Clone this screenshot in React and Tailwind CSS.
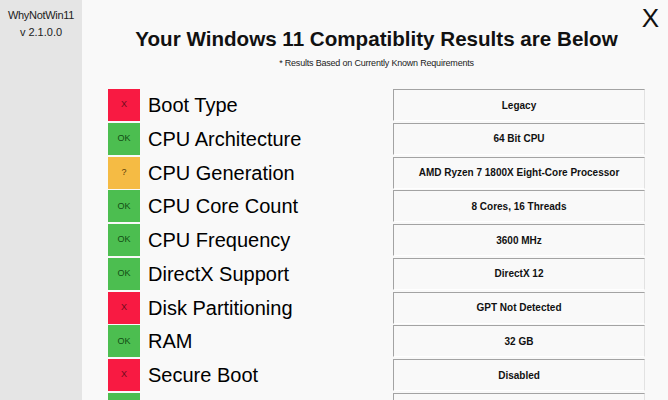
import React from "react";

const checks = [
  { status: "fail", label: "Boot Type", value: "Legacy" },
  { status: "ok", label: "CPU Architecture", value: "64 Bit CPU" },
  { status: "warn", label: "CPU Generation", value: "AMD Ryzen 7 1800X Eight-Core Processor" },
  { status: "ok", label: "CPU Core Count", value: "8 Cores, 16 Threads" },
  { status: "ok", label: "CPU Frequency", value: "3600 MHz" },
  { status: "ok", label: "DirectX Support", value: "DirectX 12" },
  { status: "fail", label: "Disk Partitioning", value: "GPT Not Detected" },
  { status: "ok", label: "RAM", value: "32 GB" },
  { status: "fail", label: "Secure Boot", value: "Disabled" },
  // next row is scrolled off the bottom of the window
  { status: "ok", label: "", value: "", hidden: true },
];

const statusStyles = {
  ok: { box: "bg-[#4cbe50] text-[#124d14]", text: "OK" },
  fail: { box: "bg-[#f81a42] text-[#6e0c1c]", text: "X" },
  warn: { box: "bg-[#f5bb44] text-[#5a3d08]", text: "?" },
};

const CheckRow = ({ status, label, value, hidden }) => {
  const s = statusStyles[status];
  return (
    <div className="flex h-8 shrink-0 items-center">
      <div
        className={`flex h-8 w-8 shrink-0 items-center justify-center text-[9px] ${s.box}`}>
        {hidden ? "" : s.text}
      </div>
      <div className="ml-2 flex-1 text-[20px] leading-none text-black">
        {label}
      </div>
      <div className="flex h-8 w-[252px] shrink-0 items-center justify-center border-t border-l border-t-[#a3a3a3] border-l-[#a3a3a3] border-r border-b border-r-[#e2e2e2] border-b-[#ffffff] bg-[#f9f9f9] text-[10px] font-bold text-[#111]">
        {value}
      </div>
    </div>
  );
};

const App = () => {
  return (
    <div
      className="relative flex h-[400px] w-[668px] overflow-hidden bg-[#f9f9f9]"
      style={{ fontFamily: '"Liberation Sans", Arial, sans-serif' }}>
      <aside className="flex w-[82px] shrink-0 flex-col items-center bg-[#e5e5e5] pt-[7px] text-[11px] leading-[17px] text-[#222]">
        <span className="tracking-[-0.3px]">WhyNotWin11</span>
        <span>v 2.1.0.0</span>
      </aside>

      <button className="absolute top-[5px] right-[9px] text-[26px] font-light leading-none text-[#111]">
        X
      </button>

      <main className="flex flex-1 flex-col pt-[27px] pl-[26px] pr-[23px]">
        <h1 className="text-center text-[20.6px] font-bold leading-6 text-[#111]">
          Your Windows 11 Compatiblity Results are Below
        </h1>
        <p className="mt-[7px] text-center text-[9px] leading-[11px] tracking-[-0.2px] text-[#222]">
          * Results Based on Currently Known Requirements
        </p>

        <div className="mt-[20px] flex flex-col gap-[1.75px]">
          {checks.map((c, i) => (
            <CheckRow key={i} {...c} />
          ))}
        </div>
      </main>
    </div>
  );
};

export default App;
